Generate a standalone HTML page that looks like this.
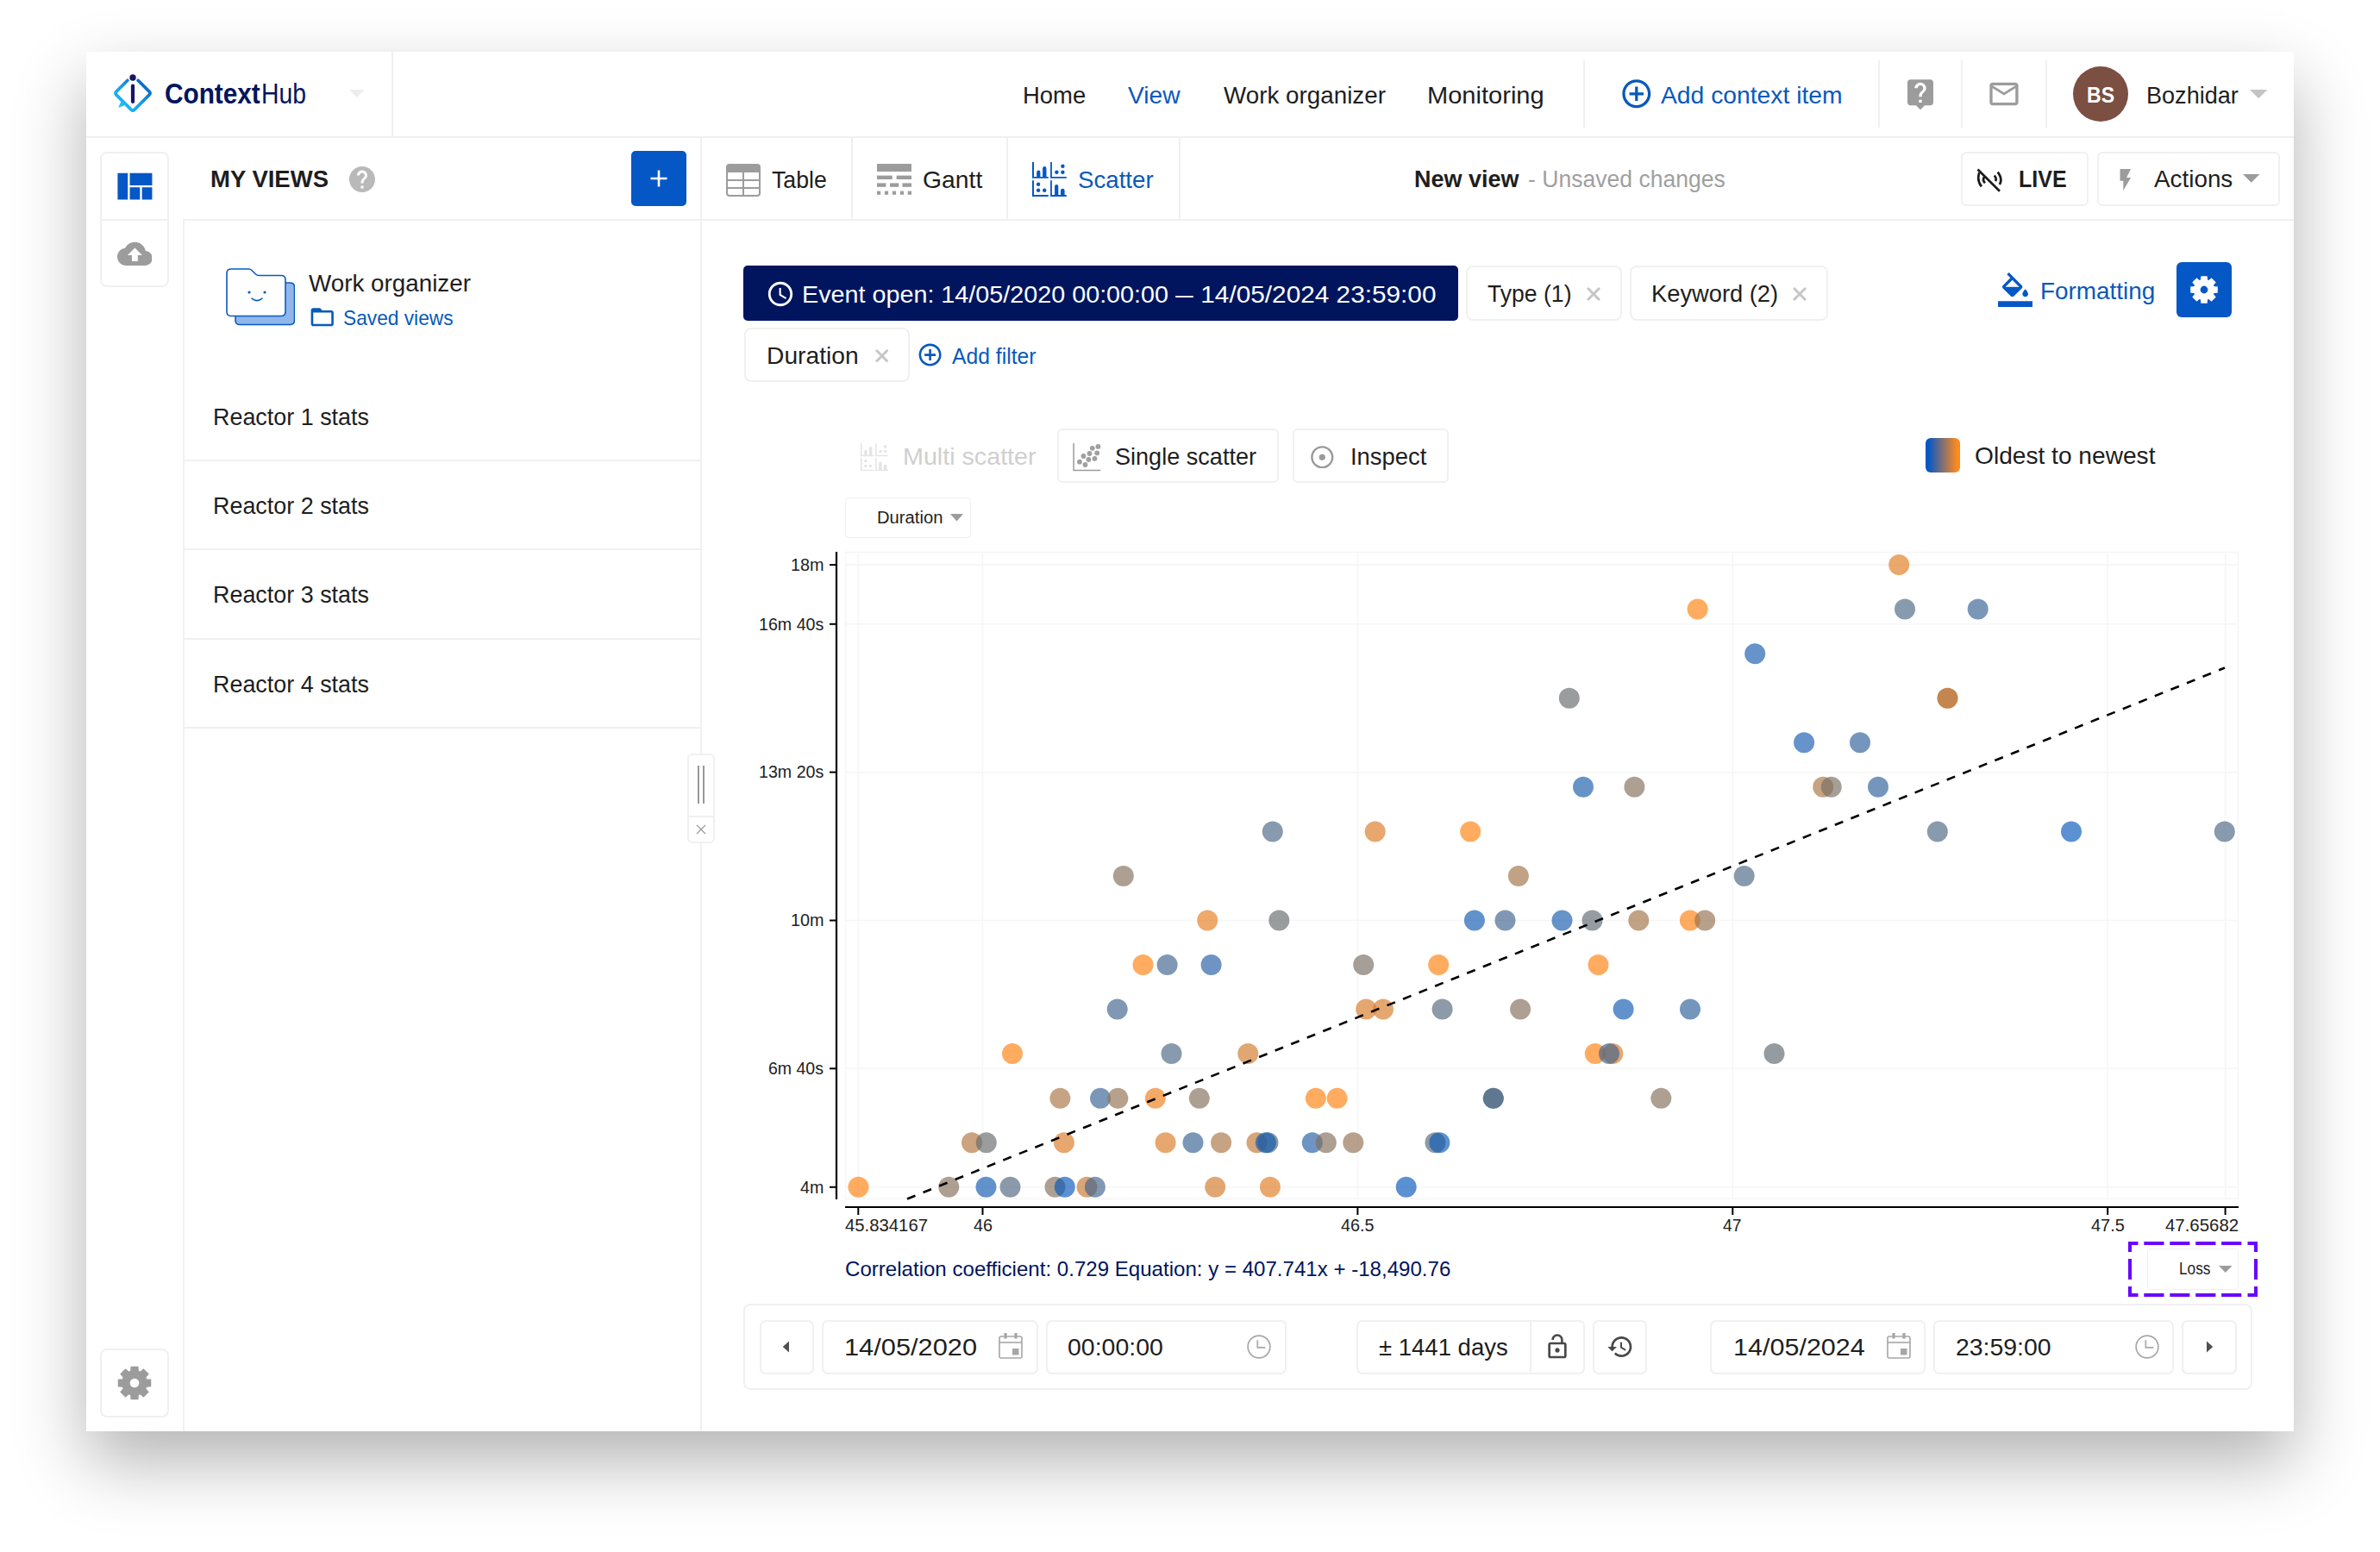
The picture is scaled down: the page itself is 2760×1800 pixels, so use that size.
<!DOCTYPE html>
<html lang="en"><head><meta charset="utf-8"><title>ContextHub - Scatter view</title>
<style>
*{box-sizing:border-box;margin:0;padding:0}
html,body{width:2760px;height:1800px;background:#fff;overflow:hidden}
body{font-family:"Liberation Sans", sans-serif;color:#1e1e1e}
#app{position:absolute;left:0;top:0;width:2760px;height:1800px}
#win{position:absolute;left:100px;top:60px;width:2560px;height:1600px;background:#fff;box-shadow:0 35px 76px rgba(0,0,0,.30)}
#app div,#app svg,#app span{position:absolute}
#app span{white-space:pre;line-height:1;transform-origin:0 50%;display:block}
</style></head>
<body><div id="app"><div id="win"></div>
<div style="left:100px;top:158px;width:2560px;height:2px;background:#f0f0f2"></div>
<div style="left:454px;top:60px;width:2px;height:98px;background:#f0f0f2"></div>
<svg style="left:131.9px;top:86.2px;" width="44" height="44" viewBox="0 0 44 44"><defs><linearGradient id="lg" x1="0" y1="1" x2="1" y2="0"><stop offset="0" stop-color="#1fc0f5"/><stop offset="0.45" stop-color="#19a4ea"/><stop offset="1" stop-color="#0a55bd"/></linearGradient></defs>
<path d="M15.9 7.20 L3.00 20.10 Q1.00 22.10 3.00 24.10 L20.00 41.10 Q22.00 43.10 24.00 41.10 L41.00 24.10 Q43.00 22.10 41.00 20.10 L28.1 7.20" fill="none" stroke="url(#lg)" stroke-width="3.7" stroke-linecap="round" stroke-linejoin="round"/>
<path d="M9 30.5 L5.2 38.8 L14.5 35.5z" fill="#1fbdf3"/>
<circle cx="22" cy="4" r="3.7" fill="#1b1464"/>
<rect x="19.9" y="11.4" width="4.2" height="22.6" rx="2.1" fill="#1b1464"/></svg>
<span style="top:93.34px;font-size:32.5px;color:#00155e;font-weight:700;left:190.9px;transform:scaleX(0.9158);">Context</span>
<span style="top:93.34px;font-size:32.5px;color:#00155e;left:303.3px;transform:scaleX(0.8721);">Hub</span>
<svg style="left:405.4px;top:104px;" width="17.400000000000034" height="9" viewBox="0 0 17.400000000000034 9"><path fill="#ededed" d="M0 0h17.400000000000034L8.700000000000017 9z"/></svg>
<span style="top:96.56px;font-size:28px;color:#1e1e1e;left:1185.7px;transform:scaleX(0.9812);">Home</span>
<span style="top:96.56px;font-size:28px;color:#0959ba;left:1308.4px;transform:scaleX(1.0069);">View</span>
<span style="top:96.56px;font-size:28px;color:#1e1e1e;left:1418.7px;transform:scaleX(0.9925);">Work organizer</span>
<span style="top:96.56px;font-size:28px;color:#1e1e1e;left:1655.3px;transform:scaleX(1.0380);">Monitoring</span>
<div style="left:1836px;top:70px;width:2px;height:78px;background:#f0f0f2"></div>
<div style="left:2178px;top:70px;width:2px;height:78px;background:#f0f0f2"></div>
<div style="left:2273.9px;top:70px;width:2px;height:78px;background:#f0f0f2"></div>
<div style="left:2372.3px;top:70px;width:2px;height:78px;background:#f0f0f2"></div>
<svg style="left:1878px;top:89.2px;" width="39.6" height="39.6" viewBox="0 0 24 24"><path fill="#0959ba" d="M13 7h-2v4H7v2h4v4h2v-4h4v-2h-4V7zm-1-5C6.48 2 2 6.48 2 12s4.48 10 10 10 10-4.48 10-10S17.52 2 12 2zm0 18c-4.41 0-8-3.59-8-8s3.59-8 8-8 8 3.59 8 8-3.59 8-8 8z"/></svg>
<span style="top:96.56px;font-size:28px;color:#0959ba;left:1926px;transform:scaleX(1.0098);">Add context item</span>
<svg style="left:2206.5px;top:89.3px;" width="40" height="40" viewBox="0 0 24 24"><path fill="#9c9c9c" d="M19 2H5c-1.11 0-2 .9-2 2v14c0 1.1.89 2 2 2h4l3 3 3-3h4c1.1 0 2-.9 2-2V4c0-1.1-.9-2-2-2zm-6 16h-2v-2h2v2zm2.07-7.75l-.9.92C13.45 11.9 13 12.5 13 14h-2v-.5c0-1.1.45-2.1 1.17-2.83l1.24-1.26c.37-.36.59-.86.59-1.41 0-1.1-.9-2-2-2s-2 .9-2 2H8c0-2.21 1.79-4 4-4s4 1.79 4 4c0 .88-.36 1.68-.93 2.25z"/></svg>
<svg style="left:2303.8px;top:89.3px;" width="39.9" height="39.9" viewBox="0 0 24 24"><path fill="#9c9c9c" d="M20 4H4c-1.1 0-1.99.9-1.99 2L2 18c0 1.1.9 2 2 2h16c1.1 0 2-.9 2-2V6c0-1.1-.9-2-2-2zm0 14H4V8l8 5 8-5v10zm-8-7L4 6h16l-8 5z"/></svg>
<div style="left:2404px;top:77px;width:64px;height:64px;border-radius:50%;background:#7b4f41"></div>
<span style="top:97.21px;font-size:26px;color:#fff;font-weight:700;left:2420.3px;transform:scaleX(0.8886);">BS</span>
<span style="top:96.56px;font-size:28px;color:#1e1e1e;left:2489px;transform:scaleX(0.9664);">Bozhidar</span>
<svg style="left:2609.4px;top:104.3px;" width="20.40000000000009" height="10.200000000000003" viewBox="0 0 20.40000000000009 10.200000000000003"><path fill="#c4c4c4" d="M0 0h20.40000000000009L10.200000000000045 10.200000000000003z"/></svg>
<div style="left:212px;top:254px;width:2448px;height:2px;background:#f0f0f2"></div>
<div style="left:812px;top:160px;width:2px;height:1500px;background:#f0f0f2"></div>
<div style="left:116px;top:176px;width:80px;height:157px;border:2px solid #f0f0f2;border-radius:8px;background:#fff;"></div>
<div style="left:118px;top:254px;width:76px;height:2px;background:#f0f0f2"></div>
<svg style="left:126.6px;top:189.2px;" width="56.5" height="56.5" viewBox="0 0 24 24"><path fill="#0657c6" d="M10 18h5v-6h-5v6zm-6 0h5V5H4v13zm12 0h5v-6h-5v6zM10 5v6h11V5H10z"/></svg>
<svg style="left:135.6px;top:273.6px;" width="40.8" height="40.8" viewBox="0 0 24 24"><path fill="#9c9c9c" d="M19.35 10.04C18.67 6.59 15.64 4 12 4 9.11 4 6.6 5.64 5.35 8.04 2.34 8.36 0 10.91 0 14c0 3.31 2.69 6 6 6h13c2.76 0 5-2.24 5-5 0-2.64-2.05-4.78-4.65-4.96zM14 13v4h-4v-4H7l5-5 5 5h-3z"/></svg>
<div style="left:116px;top:1564px;width:80px;height:80px;border:2px solid #f0f0f2;border-radius:8px;background:#fff;"></div>
<svg style="left:136px;top:1583.7px;" width="40" height="40" viewBox="0 0 40 40"><path d="M15.98 6.43L16.25 1.59L23.75 1.59L24.02 6.43L26.75 7.56L30.37 4.33L35.67 9.63L32.44 13.25L33.57 15.98L38.41 16.25L38.41 23.75L33.57 24.02L32.44 26.75L35.67 30.37L30.37 35.67L26.75 32.44L24.02 33.57L23.75 38.41L16.25 38.41L15.98 33.57L13.25 32.44L9.63 35.67L4.33 30.37L7.56 26.75L6.43 24.02L1.59 23.75L1.59 16.25L6.43 15.98L7.56 13.25L4.33 9.63L9.63 4.33L13.25 7.56zM13.78 20.00a6.2219999999999995 6.2219999999999995 0 1 0 12.443999999999999 0a6.2219999999999995 6.2219999999999995 0 1 0 -12.443999999999999 0z" fill="#9c9c9c" fill-rule="evenodd" stroke="#9c9c9c" stroke-width="1.71" stroke-linejoin="round"/></svg>
<span style="top:193.96px;font-size:28px;color:#1e1e1e;font-weight:700;left:244px;transform:scaleX(0.9820);">MY VIEWS</span>
<svg style="left:401.5px;top:189.8px;" width="36" height="36" viewBox="0 0 24 24"><path fill="#b9b9b9" d="M12 2C6.48 2 2 6.48 2 12s4.48 10 10 10 10-4.48 10-10S17.52 2 12 2zm1 17h-2v-2h2v2zm2.07-7.75l-.9.92C13.45 12.9 13 13.5 13 15h-2v-.5c0-1.1.45-2.1 1.17-2.83l1.24-1.26c.37-.36.59-.86.59-1.41 0-1.1-.9-2-2-2s-2 .9-2 2H8c0-2.21 1.79-4 4-4s4 1.79 4 4c0 .88-.36 1.68-.93 2.25z"/></svg>
<div style="left:732px;top:174.5px;width:64px;height:64px;background:#0657c6;border-radius:5px"></div>
<svg style="left:732px;top:174.5px;" width="64" height="64" viewBox="0 0 64 64"><path d="M32 22.5v19M22.5 32h19" stroke="#fff" stroke-width="2.6" fill="none"/></svg>
<div style="left:987px;top:160px;width:2px;height:94px;background:#f0f0f2"></div>
<div style="left:1167px;top:160px;width:2px;height:94px;background:#f0f0f2"></div>
<div style="left:1366.5px;top:160px;width:2px;height:94px;background:#f0f0f2"></div>
<svg style="left:842px;top:190px;" width="40" height="38" viewBox="0 0 40 38"><rect x="1" y="1" width="38" height="36" rx="3" fill="none" stroke="#9c9c9c" stroke-width="2"/>
<path d="M1 4 Q1 1 4 1 H36 Q39 1 39 4 V10 H1z" fill="#9c9c9c"/>
<path d="M20 10V37M1 19H39M1 28H39" stroke="#9c9c9c" stroke-width="2" fill="none"/></svg>
<span style="top:194.86px;font-size:28px;color:#1e1e1e;left:894.5px;transform:scaleX(0.9531);">Table</span>
<svg style="left:1017px;top:190.2px;" width="40" height="36" viewBox="0 0 40 36"><rect x="0" y="0" width="40" height="9" fill="#9c9c9c"/>
<rect x="0" y="13.6" width="17.8" height="4.4" fill="#9c9c9c"/><rect x="22.6" y="13.6" width="17.4" height="4.4" fill="#9c9c9c"/>
<rect x="0" y="22.4" width="10.4" height="4.4" fill="#9c9c9c"/><rect x="15" y="22.4" width="10.2" height="4.4" fill="#9c9c9c"/><rect x="29.5" y="22.4" width="10.5" height="4.4" fill="#9c9c9c"/>
<rect x="0" y="31.6" width="4.2" height="4.2" fill="#9c9c9c"/><rect x="8.9" y="31.6" width="4.2" height="4.2" fill="#9c9c9c"/><rect x="17.9" y="31.6" width="4.2" height="4.2" fill="#9c9c9c"/><rect x="26.9" y="31.6" width="4.2" height="4.2" fill="#9c9c9c"/><rect x="35.7" y="31.6" width="4.3" height="4.2" fill="#9c9c9c"/></svg>
<span style="top:194.86px;font-size:28px;color:#1e1e1e;left:1070px;transform:scaleX(1.0119);">Gantt</span>
<svg style="left:1196.8px;top:188px;" width="40" height="40" viewBox="0 0 20 20"><g fill="#0657c6"><path d="M0 0h1v8.5h8.4v.9H0zM10.55 0h.9v8.5h8.45v.9h-9.35zM0 10.65h1v8.4h8.4v.95H0zM10.55 10.65h.9v8.4h8.45v.95h-9.35z"/>
<path d="M2.6 9V5.85a1.05 1.05 0 0 1 2.1 0V9zM6.05 9V3.6a1.1 1.1 0 0 1 2.2 0V9zM13.05 19.5v-5.4a1.05 1.05 0 0 1 2.1 0v5.4zM16.5 19.5v-3a1.15 1.15 0 0 1 2.3 0v3z"/>
<circle cx="17.7" cy="2.4" r="1.1"/><circle cx="14.2" cy="5.85" r="1.1"/><circle cx="17.7" cy="5.85" r="1.1"/>
<circle cx="3.55" cy="12.85" r="1.1"/><circle cx="3.55" cy="16.4" r="1.1"/><circle cx="7.1" cy="16.4" r="1.1"/></g></svg>
<span style="top:194.86px;font-size:28px;color:#0959ba;left:1250px;transform:scaleX(0.9876);">Scatter</span>
<span style="top:194.46px;font-size:28px;color:#1e1e1e;font-weight:700;left:1640px;transform:scaleX(0.9638);">New view</span>
<span style="top:194.46px;font-size:28px;color:#a0a0a0;left:1771.6px;transform:scaleX(0.9487);">- Unsaved changes</span>
<div style="left:2273.5px;top:175.5px;width:148.5px;height:63.0px;border:2px solid #f0f0f2;border-radius:6px;background:#fff;"></div>
<svg style="left:2292px;top:194px;" width="32" height="30" viewBox="0 0 32 30"><g fill="none" stroke="#1c1c1c" stroke-width="2.7"><path d="M3.3 6.1Q0.2 14.95 5.9 22.4"/><path d="M9.5 10.5Q6.25 14.85 10 18.2"/><path d="M20.8 9.5Q23.75 13.15 22.1 16.2"/><path d="M24.7 5.6Q30.85 13.8 26.8 20"/><path d="M1.5 2.5L27 27.8" stroke-width="2.7"/></g></svg>
<span style="top:194.46px;font-size:28px;color:#1e1e1e;font-weight:700;left:2341px;transform:scaleX(0.8934);">LIVE</span>
<div style="left:2431.5px;top:175.5px;width:212.0px;height:63.0px;border:2px solid #f0f0f2;border-radius:6px;background:#fff;"></div>
<svg style="left:2458.4px;top:196px;overflow:visible" width="13.6" height="25" viewBox="0 0 10 20"><path fill="#9c9c9c" d="M0 0v11h3v9l7-12h-4l4-8z"/></svg>
<span style="top:194.46px;font-size:28px;color:#1e1e1e;left:2498px;transform:scaleX(0.9942);">Actions</span>
<svg style="left:2600.5px;top:202px;" width="19.5" height="9.800000000000011" viewBox="0 0 19.5 9.800000000000011"><path fill="#9c9c9c" d="M0 0h19.5L9.75 9.800000000000011z"/></svg>
<div style="left:212px;top:256px;width:2px;height:1404px;background:#f0f0f2"></div>
<svg style="left:262px;top:311px;" width="80" height="67" viewBox="0 0 80 67"><path d="M12 17 H74.5 Q79.5 17 79.5 22 V60.5 Q79.5 65.5 74.5 65.5 H16 Q11 65.5 11 60.5z" fill="#8fb7ec" stroke="#0b59c0" stroke-width="1.6"/>
<path d="M6 1 H26.5 Q28.5 1 30 2.5 L34.5 7 Q36 8.5 38.5 8.5 H64 Q69 8.5 69 13.5 V50.5 Q69 55.5 64 55.5 H6 Q1 55.5 1 50.5 V6 Q1 1 6 1z" fill="#fff" stroke="#0b59c0" stroke-width="1.6"/>
<circle cx="27" cy="28" r="1.6" fill="#0b59c0"/><circle cx="45" cy="28" r="1.6" fill="#0b59c0"/>
<path d="M30 35.2 Q36 40 42 35.2" fill="none" stroke="#0b59c0" stroke-width="1.6" stroke-linecap="round"/></svg>
<span style="top:315.26px;font-size:28px;color:#1e1e1e;left:358.3px;transform:scaleX(0.9925);">Work organizer</span>
<svg style="left:357.8px;top:352.4px;" width="31.5" height="31.5" viewBox="0 0 24 24"><path fill="#0959ba" d="M20 6h-8l-2-2H4c-1.1 0-1.99.9-1.99 2L2 18c0 1.1.9 2 2 2h16c1.1 0 2-.9 2-2V8c0-1.1-.9-2-2-2zm0 12H4V8h16v10z"/></svg>
<span style="top:356.86px;font-size:24px;color:#0959ba;left:398.4px;transform:scaleX(0.9470);">Saved views</span>
<span style="top:470.26px;font-size:28px;color:#1e1e1e;left:247.2px;transform:scaleX(0.9612);">Reactor 1 stats</span>
<span style="top:573.36px;font-size:28px;color:#1e1e1e;left:247.2px;transform:scaleX(0.9612);">Reactor 2 stats</span>
<span style="top:676.46px;font-size:28px;color:#1e1e1e;left:247.2px;transform:scaleX(0.9612);">Reactor 3 stats</span>
<span style="top:780.36px;font-size:28px;color:#1e1e1e;left:247.2px;transform:scaleX(0.9612);">Reactor 4 stats</span>
<div style="left:214px;top:532.5px;width:598px;height:2px;background:#f0f0f2"></div>
<div style="left:214px;top:636px;width:598px;height:2px;background:#f0f0f2"></div>
<div style="left:214px;top:739.5px;width:598px;height:2px;background:#f0f0f2"></div>
<div style="left:214px;top:843px;width:598px;height:2px;background:#f0f0f2"></div>
<div style="left:797px;top:874px;width:32px;height:104px;border:2px solid #f0f0f2;border-radius:6px;background:#fff;"></div>
<div style="left:799px;top:946px;width:28px;height:2px;background:#f0f0f2"></div>
<div style="left:809px;top:888px;width:2px;height:44px;background:#999"></div>
<div style="left:815px;top:888px;width:2px;height:44px;background:#999"></div>
<svg style="left:807px;top:956px;" width="12" height="12" viewBox="0 0 12 12"><path d="M1 1L11 11M11 1L1 11" stroke="#999" stroke-width="1.2"/></svg>
<div style="left:862px;top:308px;width:829px;height:64px;background:#00155e;border-radius:5px"></div>
<svg style="left:887.8px;top:324.3px;" width="34" height="34" viewBox="0 0 24 24"><path fill="#fff" d="M11.99 2C6.47 2 2 6.48 2 12s4.47 10 9.99 10C17.52 22 22 17.52 22 12S17.52 2 11.99 2zM12 20c-4.42 0-8-3.58-8-8s3.58-8 8-8 8 3.58 8 8-3.58 8-8 8zm.5-13H11v6l5.25 3.15.75-1.23-4.5-2.67z"/></svg>
<span style="top:327.66px;font-size:28px;color:#fff;left:929.7px;transform:scaleX(1.0263);">Event open: 14/05/2020 00:00:00 </span>
<span style="top:327.66px;font-size:28px;color:#fff;left:1362.7px;transform:scaleX(0.7429);">—</span>
<span style="top:327.66px;font-size:28px;color:#fff;left:1383.5px;transform:scaleX(1.0635);"> 14/05/2024 23:59:00</span>
<div style="left:1699.5px;top:308px;width:181.0px;height:63.5px;border:2px solid #f0f0f2;border-radius:8px;background:#fff;"></div>
<span style="top:326.86px;font-size:28px;color:#1e1e1e;left:1725.4px;transform:scaleX(0.9493);">Type (1)</span>
<svg style="left:1840px;top:332.75px;" width="16" height="16" viewBox="0 0 16 16"><path d="M1 1L15 15M15 1L1 15" stroke="#c6c6c6" stroke-width="3" fill="none"/></svg>
<div style="left:1889.5px;top:308px;width:230.0px;height:63.5px;border:2px solid #f0f0f2;border-radius:8px;background:#fff;"></div>
<span style="top:326.86px;font-size:28px;color:#1e1e1e;left:1915.3px;transform:scaleX(0.9746);">Keyword (2)</span>
<svg style="left:2079px;top:332.75px;" width="16" height="16" viewBox="0 0 16 16"><path d="M1 1L15 15M15 1L1 15" stroke="#c6c6c6" stroke-width="3" fill="none"/></svg>
<div style="left:862.5px;top:380px;width:192.0px;height:63px;border:2px solid #f0f0f2;border-radius:8px;background:#fff;"></div>
<span style="top:398.76px;font-size:28px;color:#1e1e1e;left:889.2px;transform:scaleX(1.0081);">Duration</span>
<svg style="left:1014.5px;top:404.75px;" width="15.5" height="15.5" viewBox="0 0 15.5 15.5"><path d="M1 1L14.5 14.5M14.5 1L1 14.5" stroke="#c6c6c6" stroke-width="3" fill="none"/></svg>
<svg style="left:1063.1px;top:396.3px;" width="31.2" height="31.2" viewBox="0 0 24 24"><path fill="#0959ba" d="M13 7h-2v4H7v2h4v4h2v-4h4v-2h-4V7zm-1-5C6.48 2 2 6.48 2 12s4.48 10 10 10 10-4.48 10-10S17.52 2 12 2zm0 18c-4.41 0-8-3.59-8-8s3.59-8 8-8 8 3.59 8 8-3.59 8-8 8z"/></svg>
<span style="top:400.41px;font-size:26px;color:#0959ba;left:1103.7px;transform:scaleX(0.9502);">Add filter</span>
<svg style="left:2317.4px;top:315.9px;" width="40" height="40" viewBox="0 0 24 24"><path fill="#0657c6" d="M16.56 8.94L7.62 0 6.21 1.41l2.38 2.38-5.15 5.15c-.59.59-.59 1.54 0 2.12l5.5 5.5c.29.29.68.44 1.06.44s.77-.15 1.06-.44l5.5-5.5c.59-.58.59-1.53 0-2.12zM5.21 10L10 5.21 14.79 10H5.21zM19 11.5s-2 2.17-2 3.5c0 1.1.9 2 2 2s2-.9 2-2c0-1.33-2-3.5-2-3.5zM0 20h24v4H0z"/></svg>
<span style="top:324.36px;font-size:28px;color:#0959ba;left:2366px;transform:scaleX(0.9961);">Formatting</span>
<div style="left:2524px;top:304px;width:64px;height:64px;background:#0657c6;border-radius:6px"></div>
<svg style="left:2536px;top:316px;" width="40" height="40" viewBox="0 0 40 40"><path d="M16.71 8.88L16.93 4.91L23.07 4.91L23.29 8.88L25.54 9.81L28.50 7.16L32.84 11.50L30.19 14.46L31.12 16.71L35.09 16.93L35.09 23.07L31.12 23.29L30.19 25.54L32.84 28.50L28.50 32.84L25.54 30.19L23.29 31.12L23.07 35.09L16.93 35.09L16.71 31.12L14.46 30.19L11.50 32.84L7.16 28.50L9.81 25.54L8.88 23.29L4.91 23.07L4.91 16.93L8.88 16.71L9.81 14.46L7.16 11.50L11.50 7.16L14.46 9.81zM14.90 20.00a5.1 5.1 0 1 0 10.2 0a5.1 5.1 0 1 0 -10.2 0z" fill="#fff" fill-rule="evenodd" stroke="#fff" stroke-width="1.40" stroke-linejoin="round"/></svg>
<svg style="left:997.8px;top:514px;" width="32.4" height="32.4" viewBox="0 0 20 20"><g fill="#e4e4e4"><path d="M0 0h1v8.5h8.4v.9H0zM10.55 0h.9v8.5h8.45v.9h-9.35zM0 10.65h1v8.4h8.4v.95H0zM10.55 10.65h.9v8.4h8.45v.95h-9.35z"/>
<path d="M2.6 9V5.85a1.05 1.05 0 0 1 2.1 0V9zM6.05 9V3.6a1.1 1.1 0 0 1 2.2 0V9zM13.05 19.5v-5.4a1.05 1.05 0 0 1 2.1 0v5.4zM16.5 19.5v-3a1.15 1.15 0 0 1 2.3 0v3z"/>
<circle cx="17.7" cy="2.4" r="1.1"/><circle cx="14.2" cy="5.85" r="1.1"/><circle cx="17.7" cy="5.85" r="1.1"/>
<circle cx="3.55" cy="12.85" r="1.1"/><circle cx="3.55" cy="16.4" r="1.1"/><circle cx="7.1" cy="16.4" r="1.1"/></g></svg>
<span style="top:516.46px;font-size:28px;color:#cfcfcf;left:1046.9px;transform:scaleX(1.0243);">Multi scatter</span>
<div style="left:1225.5px;top:496.5px;width:257.0px;height:63.0px;border:2px solid #f0f0f2;border-radius:6px;background:#fff;"></div>
<svg style="left:1243.5px;top:514px;" width="33" height="33" viewBox="0 0 33 33"><path d="M1.1 0V31.4H32.3" fill="none" stroke="#9a9a9a" stroke-width="1.5"/><g fill="#a0a0a0"><circle cx="8" cy="21.7" r="2.9"/><circle cx="14.5" cy="25" r="2.9"/><circle cx="12.5" cy="15" r="2.9"/><circle cx="18.4" cy="19" r="2.9"/><circle cx="19.5" cy="12" r="2.9"/><circle cx="25.5" cy="17.9" r="2.9"/><circle cx="22.8" cy="5.8" r="2.9"/><circle cx="28.2" cy="11.4" r="2.9"/><circle cx="29.4" cy="3.9" r="2.9"/></g></svg>
<span style="top:516.46px;font-size:28px;color:#1e1e1e;left:1293px;transform:scaleX(0.9667);">Single scatter</span>
<div style="left:1498.8px;top:496.5px;width:180.9000000000001px;height:63.0px;border:2px solid #f0f0f2;border-radius:6px;background:#fff;"></div>
<svg style="left:1520px;top:516.5px;" width="26.6" height="26.6" viewBox="0 0 26.6 26.6"><circle cx="13.3" cy="13.3" r="11.9" fill="none" stroke="#9a9a9a" stroke-width="2.4"/><circle cx="13.3" cy="13.3" r="3.6" fill="#9a9a9a"/></svg>
<span style="top:516.46px;font-size:28px;color:#1e1e1e;left:1565.9px;transform:scaleX(0.9792);">Inspect</span>
<div style="left:2233px;top:508px;width:40px;height:40px;border-radius:6px;background:linear-gradient(90deg,#0657c6 0%,#0657c6 8%,#ff8a1e 92%,#ff8a1e 100%)"></div>
<span style="top:514.56px;font-size:28px;color:#1e1e1e;left:2290.2px;transform:scaleX(1.0045);">Oldest to newest</span>
<div style="left:980px;top:576.5px;width:145.5px;height:47.0px;border:1.5px solid #f0f0f2;border-radius:4px;background:#fff;"></div>
<span style="top:589.57px;font-size:20px;color:#1e1e1e;left:1016.6px;transform:scaleX(1.0105);">Duration</span>
<svg style="left:1102px;top:596px;" width="15" height="8.5" viewBox="0 0 15 8.5"><path fill="#9c9c9c" d="M0 0h15L7.5 8.5z"/></svg>
<svg style="left:0px;top:0px;pointer-events:none" width="2760" height="1800" viewBox="0 0 2760 1800"><rect x="980.5" y="640.5" width="1615" height="750" fill="none" stroke="#f6f6f7" stroke-width="1.6"/><path d="M995.3 640V1391" stroke="#f6f6f7" stroke-width="1.6"/><path d="M1139.5 640V1391" stroke="#f6f6f7" stroke-width="1.6"/><path d="M1574.4 640V1391" stroke="#f6f6f7" stroke-width="1.6"/><path d="M2009.3 640V1391" stroke="#f6f6f7" stroke-width="1.6"/><path d="M2444.2 640V1391" stroke="#f6f6f7" stroke-width="1.6"/><path d="M2580.6 640V1391" stroke="#f6f6f7" stroke-width="1.6"/><path d="M980 655.1H2596" stroke="#f6f6f7" stroke-width="1.6"/><path d="M980 723.8H2596" stroke="#f6f6f7" stroke-width="1.6"/><path d="M980 895.6H2596" stroke="#f6f6f7" stroke-width="1.6"/><path d="M980 1067.5H2596" stroke="#f6f6f7" stroke-width="1.6"/><path d="M980 1239.3H2596" stroke="#f6f6f7" stroke-width="1.6"/><path d="M980 1376.8H2596" stroke="#f6f6f7" stroke-width="1.6"/><path d="M970 640V1391" stroke="#000" stroke-width="2.2"/><path d="M980 1400H2596" stroke="#000" stroke-width="2.2"/><path d="M995.3 1400v9" stroke="#000" stroke-width="2"/><path d="M1139.5 1400v9" stroke="#000" stroke-width="2"/><path d="M1574.4 1400v9" stroke="#000" stroke-width="2"/><path d="M2009.3 1400v9" stroke="#000" stroke-width="2"/><path d="M2444.2 1400v9" stroke="#000" stroke-width="2"/><path d="M2580.6 1400v9" stroke="#000" stroke-width="2"/><path d="M962 655.1h8" stroke="#000" stroke-width="2"/><path d="M962 723.8h8" stroke="#000" stroke-width="2"/><path d="M962 895.6h8" stroke="#000" stroke-width="2"/><path d="M962 1067.5h8" stroke="#000" stroke-width="2"/><path d="M962 1239.3h8" stroke="#000" stroke-width="2"/><path d="M962 1376.8h8" stroke="#000" stroke-width="2"/><circle cx="995.5" cy="1376.8" r="12" fill="#ff7f0e" fill-opacity="0.66"/><circle cx="1100.3" cy="1376.8" r="12" fill="#836e59" fill-opacity="0.66"/><circle cx="1143.5" cy="1376.8" r="12" fill="#0f5ab2" fill-opacity="0.66"/><circle cx="1171.5" cy="1376.8" r="12" fill="#4d667f" fill-opacity="0.66"/><circle cx="1223.5" cy="1376.8" r="12" fill="#836e59" fill-opacity="0.66"/><circle cx="1234.8" cy="1376.8" r="12" fill="#0658ba" fill-opacity="0.66"/><circle cx="1260.5" cy="1376.8" r="12" fill="#c77730" fill-opacity="0.66"/><circle cx="1269.9" cy="1376.8" r="12" fill="#3e638b" fill-opacity="0.66"/><circle cx="1409.2" cy="1376.8" r="12" fill="#d0792a" fill-opacity="0.66"/><circle cx="1472.9" cy="1376.8" r="12" fill="#e07b21" fill-opacity="0.66"/><circle cx="1630.7" cy="1376.8" r="12" fill="#0658ba" fill-opacity="0.66"/><circle cx="1127" cy="1325.2" r="12" fill="#b2743d" fill-opacity="0.66"/><circle cx="1143.8" cy="1325.2" r="12" fill="#646a6c" fill-opacity="0.66"/><circle cx="1233.9" cy="1325.2" r="12" fill="#da7a25" fill-opacity="0.66"/><circle cx="1351.6" cy="1325.2" r="12" fill="#da7a25" fill-opacity="0.66"/><circle cx="1383.5" cy="1325.2" r="12" fill="#356193" fill-opacity="0.66"/><circle cx="1416.1" cy="1325.2" r="12" fill="#a87343" fill-opacity="0.66"/><circle cx="1457.5" cy="1325.2" r="12" fill="#c17734" fill-opacity="0.66"/><circle cx="1470.5" cy="1325.2" r="12" fill="#556778" fill-opacity="0.66"/><circle cx="1467.9" cy="1325.2" r="12" fill="#0f5ab2" fill-opacity="0.66"/><circle cx="1521.8" cy="1325.2" r="12" fill="#225da3" fill-opacity="0.66"/><circle cx="1537.8" cy="1325.2" r="12" fill="#836e59" fill-opacity="0.66"/><circle cx="1569.3" cy="1325.2" r="12" fill="#927050" fill-opacity="0.66"/><circle cx="1664.5" cy="1325.2" r="12" fill="#556778" fill-opacity="0.66"/><circle cx="1669.4" cy="1325.2" r="12" fill="#0c59b5" fill-opacity="0.66"/><circle cx="1229.4" cy="1273.7" r="12" fill="#a87343" fill-opacity="0.66"/><circle cx="1276" cy="1273.7" r="12" fill="#356193" fill-opacity="0.66"/><circle cx="1296.4" cy="1273.7" r="12" fill="#927050" fill-opacity="0.66"/><circle cx="1339.8" cy="1273.7" r="12" fill="#f07d17" fill-opacity="0.66"/><circle cx="1390.8" cy="1273.7" r="12" fill="#836e59" fill-opacity="0.66"/><circle cx="1525.8" cy="1273.7" r="12" fill="#ff7f0e" fill-opacity="0.66"/><circle cx="1550.6" cy="1273.7" r="12" fill="#ff7f0e" fill-opacity="0.66"/><circle cx="1731.8" cy="1273.7" r="12" fill="#155bae" fill-opacity="0.66"/><circle cx="1731.8" cy="1273.7" r="12" fill="#5c6972" fill-opacity="0.66"/><circle cx="1926.3" cy="1273.7" r="12" fill="#836e59" fill-opacity="0.66"/><circle cx="1174" cy="1222.1" r="12" fill="#ff7f0e" fill-opacity="0.66"/><circle cx="1358.5" cy="1222.1" r="12" fill="#4a6582" fill-opacity="0.66"/><circle cx="1447.3" cy="1222.1" r="12" fill="#d0792a" fill-opacity="0.66"/><circle cx="1849.8" cy="1222.1" r="12" fill="#ff7f0e" fill-opacity="0.66"/><circle cx="1870.3" cy="1222.1" r="12" fill="#da7a25" fill-opacity="0.66"/><circle cx="1866" cy="1222.1" r="12" fill="#3e638b" fill-opacity="0.66"/><circle cx="2057.5" cy="1222.1" r="12" fill="#5c6972" fill-opacity="0.66"/><circle cx="1295.7" cy="1170.6" r="12" fill="#3e638b" fill-opacity="0.66"/><circle cx="1584.2" cy="1170.6" r="12" fill="#d77a26" fill-opacity="0.66"/><circle cx="1604" cy="1170.6" r="12" fill="#d77a26" fill-opacity="0.66"/><circle cx="1672.6" cy="1170.6" r="12" fill="#51667c" fill-opacity="0.66"/><circle cx="1763.1" cy="1170.6" r="12" fill="#836e59" fill-opacity="0.66"/><circle cx="1882.6" cy="1170.6" r="12" fill="#0f5ab2" fill-opacity="0.66"/><circle cx="1960" cy="1170.6" r="12" fill="#2c5f9b" fill-opacity="0.66"/><circle cx="1325.5" cy="1119.0" r="12" fill="#ff7f0e" fill-opacity="0.66"/><circle cx="1353.6" cy="1119.0" r="12" fill="#3e638b" fill-opacity="0.66"/><circle cx="1404.6" cy="1119.0" r="12" fill="#225da3" fill-opacity="0.66"/><circle cx="1581.2" cy="1119.0" r="12" fill="#776d61" fill-opacity="0.66"/><circle cx="1668.2" cy="1119.0" r="12" fill="#ff7f0e" fill-opacity="0.66"/><circle cx="1853.5" cy="1119.0" r="12" fill="#ff7f0e" fill-opacity="0.66"/><circle cx="1400.2" cy="1067.5" r="12" fill="#e67c1d" fill-opacity="0.66"/><circle cx="1483.3" cy="1067.5" r="12" fill="#646a6c" fill-opacity="0.66"/><circle cx="1709.9" cy="1067.5" r="12" fill="#0f5ab2" fill-opacity="0.66"/><circle cx="1745.5" cy="1067.5" r="12" fill="#3e638b" fill-opacity="0.66"/><circle cx="1811.5" cy="1067.5" r="12" fill="#155bae" fill-opacity="0.66"/><circle cx="1846.5" cy="1067.5" r="12" fill="#5c6972" fill-opacity="0.66"/><circle cx="1900.3" cy="1067.5" r="12" fill="#a27246" fill-opacity="0.66"/><circle cx="1959.9" cy="1067.5" r="12" fill="#ff7f0e" fill-opacity="0.66"/><circle cx="1977.2" cy="1067.5" r="12" fill="#927050" fill-opacity="0.66"/><circle cx="1302.8" cy="1015.9" r="12" fill="#836e59" fill-opacity="0.66"/><circle cx="1760.9" cy="1015.9" r="12" fill="#a27246" fill-opacity="0.66"/><circle cx="2022.7" cy="1015.9" r="12" fill="#4a6582" fill-opacity="0.66"/><circle cx="1475.8" cy="964.4" r="12" fill="#4a6582" fill-opacity="0.66"/><circle cx="1594.7" cy="964.4" r="12" fill="#da7a25" fill-opacity="0.66"/><circle cx="1705.2" cy="964.4" r="12" fill="#ff7f0e" fill-opacity="0.66"/><circle cx="2246.8" cy="964.4" r="12" fill="#4a6582" fill-opacity="0.66"/><circle cx="2402" cy="964.4" r="12" fill="#0658ba" fill-opacity="0.66"/><circle cx="2579.8" cy="964.4" r="12" fill="#4a6582" fill-opacity="0.66"/><circle cx="1836" cy="912.8" r="12" fill="#195caa" fill-opacity="0.66"/><circle cx="1895.4" cy="912.8" r="12" fill="#836e59" fill-opacity="0.66"/><circle cx="2114.2" cy="912.8" r="12" fill="#a87343" fill-opacity="0.66"/><circle cx="2123.7" cy="912.8" r="12" fill="#776d61" fill-opacity="0.66"/><circle cx="2178" cy="912.8" r="12" fill="#2c5f9b" fill-opacity="0.66"/><circle cx="2092.1" cy="861.3" r="12" fill="#155bae" fill-opacity="0.66"/><circle cx="2157" cy="861.3" r="12" fill="#2c5f9b" fill-opacity="0.66"/><circle cx="1819.8" cy="809.7" r="12" fill="#646a6c" fill-opacity="0.66"/><circle cx="2258.5" cy="809.7" r="12" fill="#f67e14" fill-opacity="0.66"/><circle cx="2258.5" cy="809.7" r="12" fill="#a87343" fill-opacity="0.66"/><circle cx="2035.2" cy="758.2" r="12" fill="#155bae" fill-opacity="0.66"/><circle cx="1968.6" cy="706.6" r="12" fill="#ff7f0e" fill-opacity="0.66"/><circle cx="2209" cy="706.6" r="12" fill="#4a6582" fill-opacity="0.66"/><circle cx="2293.7" cy="706.6" r="12" fill="#356193" fill-opacity="0.66"/><circle cx="2202.2" cy="655.1" r="12" fill="#e07b21" fill-opacity="0.66"/><path d="M1052 1390.5L2580 774.5" stroke="#000" stroke-width="2.6" stroke-dasharray="10.2 9.8" fill="none"/></svg>
<span style="top:644.84px;font-size:20px;color:#222;left:916.7px;transform:scaleX(0.9921);">18m</span>
<span style="top:713.58px;font-size:20px;color:#222;left:880px;transform:scaleX(0.9815);">16m 40s</span>
<span style="top:885.42px;font-size:20px;color:#222;left:880px;transform:scaleX(0.9815);">13m 20s</span>
<span style="top:1057.26px;font-size:20px;color:#222;left:916.7px;transform:scaleX(0.9921);">10m</span>
<span style="top:1229.10px;font-size:20px;color:#222;left:891.4px;transform:scaleX(0.9742);">6m 40s</span>
<span style="top:1366.57px;font-size:20px;color:#222;left:928px;transform:scaleX(0.9821);">4m</span>
<span style="top:1411.47px;font-size:20px;color:#222;left:980.3px;transform:scaleX(1.0154);">45.834167</span>
<span style="top:1411.47px;font-size:20px;color:#222;left:1128.5px;transform:scaleX(0.9888);">46</span>
<span style="top:1411.47px;font-size:20px;color:#222;left:1555.2px;transform:scaleX(0.9888);">46.5</span>
<span style="top:1411.47px;font-size:20px;color:#222;left:1998.2px;transform:scaleX(0.9618);">47</span>
<span style="top:1411.47px;font-size:20px;color:#222;left:2424.5px;transform:scaleX(0.9965);">47.5</span>
<span style="top:1411.47px;font-size:20px;color:#222;left:2510.5px;transform:scaleX(1.0201);">47.65682</span>
<span style="top:1460.16px;font-size:24px;color:#00155e;left:980.3px;transform:scaleX(1.0032);">Correlation coefficient: 0.729 Equation: y = 407.741x + -18,490.76</span>
<svg style="left:0px;top:0px;pointer-events:none" width="2760" height="1800" viewBox="0 0 2760 1800"><path d="M2468 1442H2479.5M2486.3 1442H2509.5M2516.3 1442H2539.4M2546.2 1442H2569.4M2576.1 1442H2599.3M2606.5 1442H2618M2468 1502H2479.5M2486.3 1502H2509.5M2516.3 1502H2539.4M2546.2 1502H2569.4M2576.1 1502H2599.3M2606.5 1502H2618M2470 1440V1452M2470 1460V1484.1M2470 1492V1504M2616 1440V1452M2616 1460V1484.1M2616 1492V1504" stroke="#6a06ff" stroke-width="4" fill="none"/></svg>
<div style="left:2490.3px;top:1448.2px;width:105.39999999999964px;height:47.5px;border:1.5px solid #f0f0f2;border-radius:4px;background:#fff;"></div>
<span style="top:1461.17px;font-size:20px;color:#1e1e1e;left:2527px;transform:scaleX(0.8615);">Loss</span>
<svg style="left:2572.5px;top:1468px;" width="15.5" height="8" viewBox="0 0 15.5 8"><path fill="#9c9c9c" d="M0 0h15.5L7.75 8z"/></svg>
<div style="left:862px;top:1512px;width:1750px;height:100px;border:2px solid #f0f0f2;border-radius:8px;background:#fff;"></div>
<div style="left:880.5px;top:1530.5px;width:63.0px;height:63.0px;border:2px solid #f0f0f1;border-radius:7px;background:#fff;"></div>
<svg style="left:0px;top:0px;" width="2760" height="1800" viewBox="0 0 2760 1800"><path d="M915 1555.6v12.8L907.8 1562z" fill="#505050"/></svg>
<div style="left:952.5px;top:1530.5px;width:251.0px;height:63.0px;border:2px solid #f0f0f1;border-radius:7px;background:#fff;"></div>
<span style="top:1549.26px;font-size:28px;color:#1e1e1e;left:979px;transform:scaleX(1.0989);">14/05/2020</span>
<svg style="left:1157.5px;top:1546px;" width="28" height="30" viewBox="0 0 28 30"><g fill="none" stroke="#a6a6a6" stroke-width="1.6"><rect x="1" y="4" width="26" height="25" rx="2"/><path d="M1 11H27"/></g><path d="M8 0v6.5M20 0v6.5" stroke="#a6a6a6" stroke-width="3.2"/><rect x="16" y="18" width="7.5" height="7.5" fill="#a6a6a6"/></svg>
<div style="left:1213px;top:1530.5px;width:278.5px;height:63.0px;border:2px solid #f0f0f1;border-radius:7px;background:#fff;"></div>
<span style="top:1549.26px;font-size:28px;color:#1e1e1e;left:1238.2px;transform:scaleX(1.0165);">00:00:00</span>
<svg style="left:1445.7px;top:1548px;" width="28" height="28" viewBox="0 0 28 28"><circle cx="14" cy="14" r="12.9" fill="none" stroke="#a8a8a8" stroke-width="1.7"/><path d="M12.3 6.3V14.9H21.3" fill="none" stroke="#a8a8a8" stroke-width="1.7"/></svg>
<div style="left:1572.5px;top:1530.5px;width:265.0px;height:63.0px;border:2px solid #f0f0f1;border-radius:7px;background:#fff;"></div>
<div style="left:1774px;top:1533px;width:2px;height:58px;background:#f0f0f2"></div>
<span style="top:1549.26px;font-size:28px;color:#1e1e1e;left:1599.1px;transform:scaleX(0.9825);">± 1441 days</span>
<svg style="left:1789.7px;top:1546px;" width="32" height="32" viewBox="0 0 24 24"><path fill="#484848" d="M12 17c1.1 0 2-.9 2-2s-.9-2-2-2-2 .9-2 2 .9 2 2 2zm6-9h-1V6c0-2.76-2.24-5-5-5S7 3.24 7 6h1.9c0-1.71 1.39-3.1 3.1-3.1 1.71 0 3.1 1.39 3.1 3.1v2H6c-1.1 0-2 .9-2 2v10c0 1.1.9 2 2 2h12c1.1 0 2-.9 2-2V10c0-1.1-.9-2-2-2zm0 12H6V10h12v10z"/></svg>
<div style="left:1846.5px;top:1530.5px;width:63.0px;height:63.0px;border:2px solid #f0f0f1;border-radius:7px;background:#fff;"></div>
<svg style="left:1862.5px;top:1546px;" width="32" height="32" viewBox="0 0 24 24"><path fill="#484848" d="M13 3c-4.97 0-9 4.03-9 9H1l3.89 3.89.07.14L9 12H6c0-3.87 3.13-7 7-7s7 3.13 7 7-3.13 7-7 7c-1.93 0-3.68-.79-4.94-2.06l-1.42 1.42C8.27 19.99 10.51 21 13 21c4.97 0 9-4.03 9-9s-4.03-9-9-9zm-1 5v5l4.28 2.54.72-1.21-3.5-2.08V8H12z"/></svg>
<div style="left:1982.5px;top:1530.5px;width:250.5px;height:63.0px;border:2px solid #f0f0f1;border-radius:7px;background:#fff;"></div>
<span style="top:1549.26px;font-size:28px;color:#1e1e1e;left:2009.5px;transform:scaleX(1.0903);">14/05/2024</span>
<svg style="left:2187.8px;top:1546px;" width="28" height="30" viewBox="0 0 28 30"><g fill="none" stroke="#a6a6a6" stroke-width="1.6"><rect x="1" y="4" width="26" height="25" rx="2"/><path d="M1 11H27"/></g><path d="M8 0v6.5M20 0v6.5" stroke="#a6a6a6" stroke-width="3.2"/><rect x="16" y="18" width="7.5" height="7.5" fill="#a6a6a6"/></svg>
<div style="left:2242.4px;top:1530.5px;width:278.7999999999997px;height:63.0px;border:2px solid #f0f0f1;border-radius:7px;background:#fff;"></div>
<span style="top:1549.26px;font-size:28px;color:#1e1e1e;left:2268.4px;transform:scaleX(1.0147);">23:59:00</span>
<svg style="left:2475.7px;top:1548px;" width="28" height="28" viewBox="0 0 28 28"><circle cx="14" cy="14" r="12.9" fill="none" stroke="#a8a8a8" stroke-width="1.7"/><path d="M12.3 6.3V14.9H21.3" fill="none" stroke="#a8a8a8" stroke-width="1.7"/></svg>
<div style="left:2530.3px;top:1530.5px;width:63.399999999999636px;height:63.0px;border:2px solid #f0f0f1;border-radius:7px;background:#fff;"></div>
<svg style="left:0px;top:0px;" width="2760" height="1800" viewBox="0 0 2760 1800"><path d="M2559 1555.5v12.9L2566.2 1562z" fill="#505050"/></svg>
</div>
<script>(function(){var w=window.innerWidth||2760;if(w>200&&Math.abs(w-2760)>4){document.getElementById('app').style.zoom=w/2760;}})();</script>
</body></html>
